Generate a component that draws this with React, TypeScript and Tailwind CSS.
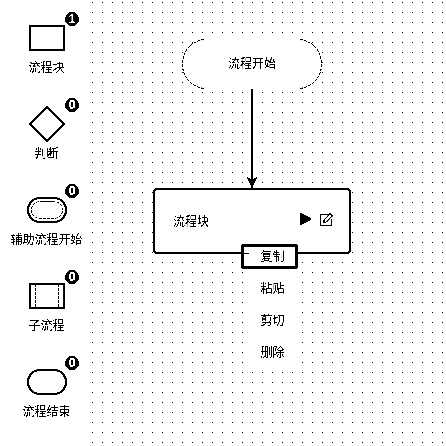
import type { ReactNode } from "react";

type PaletteItem = { label: string; count: number; shape: ReactNode };

const line = { fill: "none", stroke: "black", strokeWidth: 2 };
const dashed = { fill: "none", stroke: "black", strokeWidth: 1 };

const palette: PaletteItem[] = [
  { label: "流程块", count: 1, shape: <rect x="6" y="8" width="34" height="24" {...line} /> },
  { label: "判断", count: 0, shape: <path d="M23 3L40 20L23 37L6 20Z" {...line} /> },
  {
    label: "辅助流程开始",
    count: 0,
    shape: (
      <>
        <rect x="4" y="8" width="38" height="24" rx="12" {...line} />
        <rect x="7.5" y="11.5" width="31" height="17" rx="9" strokeDasharray="3 1" {...dashed} />
      </>
    ),
  },
  {
    label: "子流程",
    count: 0,
    shape: (
      <>
        <rect x="6" y="8" width="34" height="24" {...line} />
        <path d="M11.5 8V32M34.5 8V32" strokeDasharray="3 1" {...dashed} />
      </>
    ),
  },
  { label: "流程结束", count: 0, shape: <rect x="4" y="8" width="38" height="24" rx="12" {...line} /> },
];

function PaletteEntry({ label, count, shape }: PaletteItem) {
  return (
    <div className="relative flex h-[86px] w-[94px] shrink-0 flex-col items-center pt-[18px]">
      <svg width="46" height="40" viewBox="0 0 46 40">{shape}</svg>
      <span className="mr-px h-[18px] whitespace-nowrap text-[12px] leading-[18px]">{label}</span>
      <span className="absolute left-[65px] top-[12px] flex h-[14px] w-[14px] items-center justify-center rounded-full bg-black font-['Liberation_Sans'] text-[13px] font-bold leading-[14px] text-white">
        {count}
      </span>
    </div>
  );
}

export default function App() {
  return (
    <div className="relative flex h-[446px] w-[446px] overflow-hidden bg-white font-['Noto_Sans_CJK_SC',sans-serif] text-black brightness-[0.94] contrast-[20]">
      <aside className="z-10 flex w-[90px] shrink-0 flex-col">
        {palette.map((item) => (
          <PaletteEntry key={item.label} {...item} />
        ))}
      </aside>

      <main className="relative flex-1 bg-[linear-gradient(to_right,white_9px,transparent_9px),linear-gradient(to_bottom,white_9px,black_9px)] bg-[length:10px_10px] bg-[position:-7px_-7px]">
        <div className="absolute left-[92px] top-[39px] flex h-[51px] w-[140px] items-center justify-center rounded-[25px] bg-white pb-[3px] text-[12px]">
          <svg className="absolute left-0 top-0" width="140" height="51" viewBox="0 0 140 51">
            <path d="M22 0.5C10 2 0.5 11 0.5 25.5C0.5 39 10 48 22 49.5M118 0.5C130 2 139.5 11 139.5 25.5C139.5 39 130 48 118 49.5" strokeDasharray="3 1" {...dashed} />
          </svg>
          <span className="relative">流程开始</span>
        </div>

        <svg className="absolute left-[156px] top-[89px]" width="12" height="100" viewBox="0 0 12 100">
          <path d="M6 0V99" {...line} />
          <path d="M6 99L0.5 88L6 90.5L11.5 88Z" />
        </svg>

        <div className="absolute left-[63px] top-[188px] flex h-[66px] w-[198px] items-center rounded-[4px] border-2 border-black bg-white pl-[18px] pr-[16px] text-[12px]">
          <span className="-mt-px flex-1">流程块</span>
          <svg className="-mt-1 mr-[9px]" width="11" height="12" viewBox="0 0 11 12">
            <path d="M0 0.5H2.5L10.5 5V7L2.5 11.5H0Z" />
          </svg>
          <svg className="-mt-1" width="13" height="13" viewBox="0 0 13 13" fill="none" stroke="black">
            <path d="M7.5 1.5H0.5V12.5H11.5V6" />
            <path d="M3.5 9.5L4 7L10 0.8L12.2 3L6.2 9Z" strokeWidth="1.2" />
          </svg>
        </div>

        <ul className="absolute left-[153px] top-[244px] flex h-[127px] w-[55px] flex-col bg-white text-center text-[12px] leading-8">
          <li className="-ml-[2px] flex h-[25px] w-[57px] shrink-0 items-center justify-center rounded-[2px] border-[3px] border-black bg-white pb-[2px] pl-[6px]">
            复制
          </li>
          <li className="h-8 pl-[4px] pt-[3px]">粘贴</li>
          <li className="h-8 pl-[4px] pt-[3px]">剪切</li>
          <li className="h-8 pl-[4px] pt-[3px]">删除</li>
        </ul>
        <div className="absolute left-[150px] top-[253px] h-px w-[9px] bg-black" />
      </main>
    </div>
  );
}
